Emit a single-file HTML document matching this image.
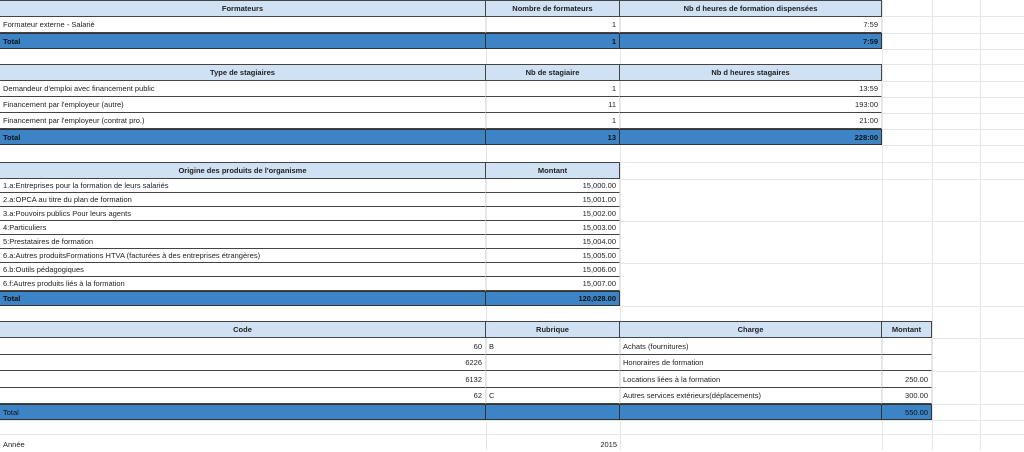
<!DOCTYPE html>
<html><head><meta charset="utf-8"><style>
body{margin:0;width:1024px;height:450px;overflow:hidden;background:#fff;font-family:"Liberation Sans",sans-serif;font-size:7.5px;color:#222;position:relative}
.c{position:absolute;box-sizing:border-box;white-space:nowrap;overflow:hidden;display:flex;align-items:center;padding:0 3px}
.h{background:#cfe1f3;font-weight:bold;justify-content:center;border:1px solid #444;border-left:none}
.t{background:#3d84c6;font-weight:bold;color:#111;border-top:1px solid #333;border-bottom:1px solid #333;border-right:1px solid #333;justify-content:flex-end}
.d{border-bottom:1px solid #444;border-right:1px solid #e4e4e4}
.r{justify-content:flex-end}
.l{justify-content:flex-start}
.g{position:absolute;background:#e6e6e6}
.n{font-family:"Liberation Sans Narrow","Liberation Sans",sans-serif}
</style></head><body>
<div class="g" style="left:882px;top:0;width:1px;height:450px"></div>
<div class="g" style="left:932px;top:0;width:1px;height:450px"></div>
<div class="g" style="left:980px;top:0;width:1px;height:450px"></div>
<div class="g" style="left:486px;top:0;width:1px;height:450px"></div>
<div class="g" style="left:620px;top:0;width:1px;height:450px"></div>
<div class="g" style="left:882px;top:16px;width:142px;height:1px"></div>
<div class="g" style="left:882px;top:33px;width:142px;height:1px"></div>
<div class="g" style="left:882px;top:49px;width:142px;height:1px"></div>
<div class="g" style="left:882px;top:64px;width:142px;height:1px"></div>
<div class="g" style="left:882px;top:81px;width:142px;height:1px"></div>
<div class="g" style="left:882px;top:97px;width:142px;height:1px"></div>
<div class="g" style="left:882px;top:113px;width:142px;height:1px"></div>
<div class="g" style="left:882px;top:129px;width:142px;height:1px"></div>
<div class="g" style="left:882px;top:145px;width:142px;height:1px"></div>
<div class="g" style="left:620px;top:162px;width:404px;height:1px"></div>
<div class="g" style="left:620px;top:179px;width:404px;height:1px"></div>
<div class="g" style="left:620px;top:221px;width:404px;height:1px"></div>
<div class="g" style="left:620px;top:263px;width:404px;height:1px"></div>
<div class="g" style="left:620px;top:306px;width:404px;height:1px"></div>
<div class="g" style="left:932px;top:338px;width:92px;height:1px"></div>
<div class="g" style="left:932px;top:371px;width:92px;height:1px"></div>
<div class="g" style="left:932px;top:404px;width:92px;height:1px"></div>
<div class="g" style="left:0;top:434px;width:1024px;height:1px"></div>
<div class="g" style="left:0;top:420px;width:1024px;height:1px"></div>

<!-- Section 1 -->
<div class="c h" style="left:0;top:0;width:486px;height:17px">Formateurs</div>
<div class="c h" style="left:486px;top:0;width:134px;height:17px">Nombre de formateurs</div>
<div class="c h" style="left:620px;top:0;width:262px;height:17px">Nb d heures de formation dispensées</div>
<div class="c d l" style="left:0;top:17px;width:486px;height:16px">Formateur externe - Salarié</div>
<div class="c d r" style="left:486px;top:17px;width:134px;height:16px">1</div>
<div class="c d r" style="left:620px;top:17px;width:262px;height:16px">7:59</div>
<div class="c t l" style="left:0;top:33px;width:486px;height:16px;justify-content:flex-start">Total</div>
<div class="c t" style="left:486px;top:33px;width:134px;height:16px">1</div>
<div class="c t" style="left:620px;top:33px;width:262px;height:16px">7:59</div>

<!-- Section 2 -->
<div class="c h" style="left:0;top:64px;width:486px;height:17px">Type de stagiaires</div>
<div class="c h" style="left:486px;top:64px;width:134px;height:17px">Nb de stagiaire</div>
<div class="c h" style="left:620px;top:64px;width:262px;height:17px">Nb d heures stagaires</div>
<div class="c d l" style="left:0;top:81px;width:486px;height:16px">Demandeur d'emploi avec financement public</div>
<div class="c d r" style="left:486px;top:81px;width:134px;height:16px">1</div>
<div class="c d r" style="left:620px;top:81px;width:262px;height:16px">13:59</div>
<div class="c d l" style="left:0;top:97px;width:486px;height:16px">Financement par l'employeur (autre)</div>
<div class="c d r" style="left:486px;top:97px;width:134px;height:16px">11</div>
<div class="c d r" style="left:620px;top:97px;width:262px;height:16px">193:00</div>
<div class="c d l" style="left:0;top:113px;width:486px;height:16px">Financement par l'employeur (contrat pro.)</div>
<div class="c d r" style="left:486px;top:113px;width:134px;height:16px">1</div>
<div class="c d r" style="left:620px;top:113px;width:262px;height:16px">21:00</div>
<div class="c t" style="left:0;top:129px;width:486px;height:16px;justify-content:flex-start">Total</div>
<div class="c t" style="left:486px;top:129px;width:134px;height:16px">13</div>
<div class="c t" style="left:620px;top:129px;width:262px;height:16px">228:00</div>

<!-- Section 3 -->
<div class="c h" style="left:0;top:162px;width:486px;height:17px">Origine des produits de l'organisme</div>
<div class="c h" style="left:486px;top:162px;width:134px;height:17px">Montant</div>
<div class="c d l" style="left:0;top:179px;width:486px;height:14px">1.a:Entreprises pour la formation de leurs salariés</div>
<div class="c d r" style="left:486px;top:179px;width:134px;height:14px">15,000.00</div>
<div class="c d l" style="left:0;top:193px;width:486px;height:14px">2.a:OPCA au titre du plan de formation</div>
<div class="c d r" style="left:486px;top:193px;width:134px;height:14px">15,001.00</div>
<div class="c d l" style="left:0;top:207px;width:486px;height:14px">3.a:Pouvoirs publics Pour leurs agents</div>
<div class="c d r" style="left:486px;top:207px;width:134px;height:14px">15,002.00</div>
<div class="c d l" style="left:0;top:221px;width:486px;height:14px">4:Particuliers</div>
<div class="c d r" style="left:486px;top:221px;width:134px;height:14px">15,003.00</div>
<div class="c d l" style="left:0;top:235px;width:486px;height:14px">5:Prestataires de formation</div>
<div class="c d r" style="left:486px;top:235px;width:134px;height:14px">15,004.00</div>
<div class="c d l" style="left:0;top:249px;width:486px;height:14px">6.a:Autres produitsFormations HTVA (facturées à des entreprises étrangères)</div>
<div class="c d r" style="left:486px;top:249px;width:134px;height:14px">15,005.00</div>
<div class="c d l" style="left:0;top:263px;width:486px;height:14px">6.b:Outils pédagogiques</div>
<div class="c d r" style="left:486px;top:263px;width:134px;height:14px">15,006.00</div>
<div class="c d l" style="left:0;top:277px;width:486px;height:14px">6.f:Autres produits liés à la formation</div>
<div class="c d r" style="left:486px;top:277px;width:134px;height:14px">15,007.00</div>
<div class="c t" style="left:0;top:291px;width:486px;height:15px;justify-content:flex-start">Total</div>
<div class="c t" style="left:486px;top:291px;width:134px;height:15px">120,028.00</div>

<!-- Section 4 -->
<div class="c h n" style="left:0;top:321px;width:486px;height:17px">Code</div>
<div class="c h n" style="left:486px;top:321px;width:134px;height:17px">Rubrique</div>
<div class="c h n" style="left:620px;top:321px;width:262px;height:17px">Charge</div>
<div class="c h n" style="left:882px;top:321px;width:50px;height:17px">Montant</div>
<div class="c d r n" style="left:0;top:338px;width:486px;height:17px">60</div>
<div class="c d l n" style="left:486px;top:338px;width:134px;height:17px">B</div>
<div class="c d l n" style="left:620px;top:338px;width:262px;height:17px">Achats (fournitures)</div>
<div class="c d r n" style="left:882px;top:338px;width:50px;height:17px"></div>
<div class="c d r n" style="left:0;top:355px;width:486px;height:16px">6226</div>
<div class="c d l n" style="left:486px;top:355px;width:134px;height:16px"></div>
<div class="c d l n" style="left:620px;top:355px;width:262px;height:16px">Honoraires de formation</div>
<div class="c d r n" style="left:882px;top:355px;width:50px;height:16px"></div>
<div class="c d r n" style="left:0;top:371px;width:486px;height:17px">6132</div>
<div class="c d l n" style="left:486px;top:371px;width:134px;height:17px"></div>
<div class="c d l n" style="left:620px;top:371px;width:262px;height:17px">Locations liées à la formation</div>
<div class="c d r n" style="left:882px;top:371px;width:50px;height:17px">250.00</div>
<div class="c d r n" style="left:0;top:388px;width:486px;height:16px">62</div>
<div class="c d l n" style="left:486px;top:388px;width:134px;height:16px">C</div>
<div class="c d l n" style="left:620px;top:388px;width:262px;height:16px">Autres services extérieurs(déplacements)</div>
<div class="c d r n" style="left:882px;top:388px;width:50px;height:16px">300.00</div>
<div class="c t n" style="left:0;top:404px;width:486px;height:16px;justify-content:flex-start;font-weight:normal">Total</div>
<div class="c t" style="left:486px;top:404px;width:134px;height:16px"></div>
<div class="c t" style="left:620px;top:404px;width:262px;height:16px"></div>
<div class="c t n" style="left:882px;top:404px;width:50px;height:16px;font-weight:normal">550.00</div>

<div class="c l n" style="left:0;top:436px;width:486px;height:16px">Année</div>
<div class="c r n" style="left:486px;top:436px;width:134px;height:16px">2015</div>
</body></html>
